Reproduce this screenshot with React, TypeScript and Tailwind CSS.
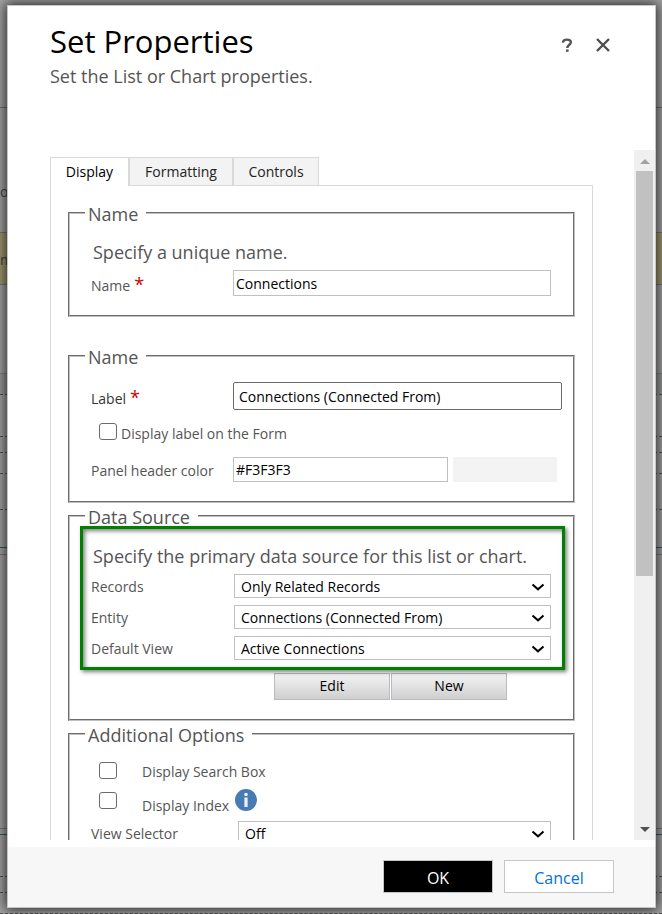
import type { ReactNode } from "react";

const backdrop = [
  { h: "h-[107px]", c: "" },
  { h: "h-[125px]", c: "border-t border-[#6f6f6f] pt-[75px]", text: "or" },
  { h: "h-[53px]", c: "border-y border-[#777] bg-[#a39c74] pt-[18px]", text: "m" },
  { h: "h-[88px]", c: "" },
  { h: "h-[21px]", c: "border-t border-[#858585] bg-[#9c9d9d]" },
  { h: "h-[42px]", c: "border-t border-dashed border-[#555]" },
  { h: "h-[16px]", c: "border-t border-dashed border-[#555]" },
  { h: "h-[21px]", c: "border-t border-dashed border-[#555]" },
  { h: "h-[36px]", c: "border-t border-dashed border-[#555]" },
  { h: "h-[38px]", c: "border-t border-dashed border-[#555]" },
  { h: "h-[7px]", c: "border-t border-[#35586b]" },
  { h: "h-[274px]", c: "border-t border-[#7b7b7b]" },
  { h: "h-[6px]", c: "border-t border-[#7b7b7b]" },
  { h: "h-[42px]", c: "border-t border-[#35586b]" },
  { h: "h-[16px]", c: "border-t border-dashed border-[#555]" },
  { h: "h-[21px]", c: "border-t border-dashed border-[#555]" },
  { h: "flex-1", c: "border-t border-dashed border-[#555]" },
];

function Backdrop() {
  return (
    <div aria-hidden="true" className="absolute inset-0 flex flex-col overflow-hidden bg-[#a6a6a6]">
      {backdrop.map((band, i) => (
        <div key={i} className={`shrink-0 overflow-hidden text-[14px] leading-[18px] text-[#444] ${band.h} ${band.c}`}>
          {band.text}
        </div>
      ))}
    </div>
  );
}

function Group({ title, className, children }: { title: string; className: string; children: ReactNode }) {
  return (
    <fieldset className={`min-w-0 border-2 [border-style:groove] border-[#c0c0c0] pl-[15px] pr-[11px] ${className}`}>
      <legend className="h-6 pl-[3px] pr-2 text-[18px] leading-[26px] text-[#555]">{title}</legend>
      {children}
    </fieldset>
  );
}

function Required() {
  return <span className="ml-1 text-[18px] leading-4 text-[#d00000]">*</span>;
}

function Choice({ id, label, value }: { id: string; label: string; value: string }) {
  return (
    <div className="flex items-center pl-[6px] pr-[11px]">
      <label htmlFor={id} className="w-[143px] shrink-0 pt-[2px]">{label}</label>
      <Dropdown id={id} value={value} />
    </div>
  );
}

function Dropdown({ id, value }: { id: string; value: string }) {
  return (
    <div className="relative min-w-0 flex-1">
      <select id={id} defaultValue={value} className="block h-6 w-full appearance-none border border-[#c0c0c0] bg-white pl-[6px] pr-6 pt-px text-[14px] leading-[22px] text-black">
        <option>{value}</option>
      </select>
      <svg viewBox="0 0 14 8" className="pointer-events-none absolute right-[6px] top-[9px] h-2 w-[14px]" fill="none" stroke="#000" strokeWidth="2">
        <path d="M1.5 1.5 7 6.3l5.500-4.800" />
      </svg>
    </div>
  );
}

const checkbox = "h-[17px] w-[18px] shrink-0 appearance-none rounded-[3px] border border-[#6b6b6b] bg-white checked:bg-[#0075ff]";
const action = "h-[27px] w-[116px] border border-[#b8bcc0] bg-linear-to-b from-[#f2f2f2] via-[#e2e2e2] to-[#cfcfcf] pb-[2px] text-[14px] leading-5 text-black";

export default function App() {
  return (
    <div className="relative flex h-screen min-h-[500px] pl-[7px] pr-[6px] pt-[5px] pb-[6px] font-['Open_Sans','Noto_Sans',sans-serif] text-[14px] leading-5 text-[#555]">
      <Backdrop />
      <main className="relative flex min-w-0 flex-1 flex-col border border-[#c6c6c6] bg-white shadow-[0_0_12px_2px_rgba(0,0,0,0.75)]">
        <header className="flex h-36 shrink-0 items-start justify-between pl-[42px] pr-[44px] pt-[15px]">
          <div>
            <h1 className="text-[31px] leading-10 text-black">Set Properties</h1>
            <p className="mt-[3px] text-[18px] leading-6">Set the List or Chart properties.</p>
          </div>
          <div className="flex items-center gap-[20px] pt-4">
            <button type="button" aria-label="Help" className="flex h-4 w-4 items-center justify-center">
              <svg viewBox="0 0 16 16" className="h-4 w-4" fill="none" stroke="#555" strokeWidth="2.4">
                <path d="M4 5.800C4 3.400 5.700 2.600 8 2.600c2.400 0 3.900 1 3.900 2.700C11.900 7.700 8.300 7.800 8.300 11" />
                <path d="M7 13.600h2.600" />
              </svg>
            </button>
            <button type="button" aria-label="Close" className="flex h-4 w-4 items-center justify-center">
              <svg viewBox="0 0 16 16" className="h-4 w-4" stroke="#4d4d4d" strokeWidth="2.400">
                <path d="m2 2 12 12M14 2 2 14" />
              </svg>
            </button>
          </div>
        </header>

        <div className="flex min-h-0 flex-1">
          <div className="min-w-0 flex-1 overflow-hidden pl-[42px] pr-[41px] pt-[7px]">
            <nav role="tablist" className="flex">
              <button type="button" role="tab" aria-selected="true" className="relative z-10 -mb-px h-[29px] w-[79px] border border-b-0 border-[#d9d9d9] bg-white text-black">Display</button>
              <button type="button" role="tab" aria-selected="false" className="h-7 w-[104px] border border-b-0 border-[#d9d9d9] bg-[#f3f3f3] text-[#222]">Formatting</button>
              <button type="button" role="tab" aria-selected="false" className="h-7 w-[86px] border border-b-0 border-[#d9d9d9] bg-[#f3f3f3] text-[#222]">Controls</button>
            </nav>
            <div className="border border-[#d9d9d9] px-[17px] pt-[15px]">
              <Group title="Name" className="mb-[27px] pb-[19px]">
                <p className="mt-[15px] pl-2 text-[18px] leading-6">Specify a unique name.</p>
                <div className="mt-[6px] flex items-center pl-[6px] pr-[11px]">
                  <label htmlFor="name" className="flex w-[142px] shrink-0 pt-[6px]">Name<Required /></label>
                  <input id="name" defaultValue="Connections" className="h-[26px] min-w-0 flex-1 border border-[#c0c0c0] bg-white px-[2px] text-black" />
                </div>
              </Group>

              <Group title="Name" className="mb-px pb-[19px]">
                <div className="mt-[14px] flex items-center pl-[6px]">
                  <label htmlFor="label" className="flex w-[142px] shrink-0 pt-[6px] text-[#333]">Label<Required /></label>
                  <input id="label" defaultValue="Connections (Connected From)" className="h-7 min-w-0 flex-1 rounded-[2px] border border-[#6b6b6b] bg-white px-[5px] text-black" />
                </div>
                <div className="mt-[13px] flex h-5 gap-1 pl-[14px]">
                  <input id="showLabel" type="checkbox" className={checkbox} />
                  <label htmlFor="showLabel" className="pt-px">Display label on the Form</label>
                </div>
                <div className="mt-[14px] flex items-center pl-[6px] pr-[5px]">
                  <label htmlFor="color" className="w-[142px] shrink-0 pt-[2px]">Panel header color</label>
                  <input id="color" defaultValue="#F3F3F3" className="mr-[5px] h-[25px] min-w-0 flex-2 border border-[#c0c0c0] bg-white px-[2px] text-black" />
                  <div className="h-[25px] flex-1 bg-[#f3f3f3]" />
                </div>
              </Group>

              <Group title="Data Source" className="mb-px pb-[19px]">
                <div className="relative mt-4">
                  <div className="pointer-events-none absolute -left-[5px] -right-[3px] -top-[18px] -bottom-[10px] z-10 border-3 border-[#008000] shadow-[2px_2px_4px_rgba(0,0,0,0.5),inset_2px_2px_4px_rgba(0,0,0,0.5)]" />
                  <p className="pl-2 text-[18px] leading-6">Specify the primary data source for this list or chart.</p>
                  <div className="mt-[6px] flex flex-col gap-[7px]">
                    <Choice id="records" label="Records" value="Only Related Records" />
                    <Choice id="entity" label="Entity" value="Connections (Connected From)" />
                    <Choice id="view" label="Default View" value="Active Connections" />
                  </div>
                </div>
                <div className="mt-[13px] flex justify-end gap-px pr-[55px]">
                  <button type="button" className={action}>Edit</button>
                  <button type="button" className={action}>New</button>
                </div>
              </Group>

              <Group title="Additional Options" className="pb-5">
                <div className="mt-4 flex h-[30px] gap-[25px] pl-[14px]">
                  <input id="search" type="checkbox" className={checkbox} />
                  <label htmlFor="search">Display Search Box</label>
                </div>
                <div className="flex h-[29px] pl-[14px]">
                  <input id="index" type="checkbox" className={checkbox} />
                  <label htmlFor="index" className="ml-[25px] pt-1">Display Index</label>
                  <svg viewBox="0 0 22 22" className="-mt-[3px] ml-[6px] h-[22px] w-[22px]" role="img" aria-label="Information">
                    <circle cx="11" cy="11" r="11" fill="#477bb5" />
                    <circle cx="11" cy="5.500" r="1.800" fill="#eef3f8" />
                    <path d="M9.400 8.500h3.200V18H9.400z" fill="#eef3f8" />
                  </svg>
                </div>
                <div className="flex items-center pl-[6px] pr-[11px]">
                  <label htmlFor="selector" className="w-[147px] shrink-0 pt-[2px]">View Selector</label>
                  <Dropdown id="selector" value="Off" />
                </div>
              </Group>
            </div>
          </div>
          <div aria-hidden="true" className="flex w-[21px] shrink-0 flex-col items-center bg-[#f0f0f0]">
            <div className="flex h-[21px] shrink-0 items-center pt-[2px]">
              <svg viewBox="0 0 10 5" className="h-[5px] w-[10px]"><path d="M5 0 10 5H0z" fill="#a3a3a3" /></svg>
            </div>
            <div className="flex min-h-0 w-[17px] flex-1 flex-col">
              <div className="flex-[405] bg-[#c1c1c1]" />
              <div className="flex-[243]" />
            </div>
            <div className="flex h-[21px] shrink-0 items-center">
              <svg viewBox="0 0 10 5" className="h-[5px] w-[10px]"><path d="M0 0H10L5 5z" fill="#505050" /></svg>
            </div>
          </div>
        </div>

        <footer className="mt-[7px] flex h-[60px] shrink-0 justify-end gap-[11px] bg-[#f7f7f7] pr-[41px] pt-[13px] text-[16px]">
          <button type="button" className="h-[33px] w-[110px] border border-[#c6c6c6] bg-black pt-[2px] text-white">OK</button>
          <button type="button" className="h-[33px] w-[110px] border border-[#c6c6c6] bg-white pt-[2px] text-[#0072d6]">Cancel</button>
        </footer>
      </main>
    </div>
  );
}
